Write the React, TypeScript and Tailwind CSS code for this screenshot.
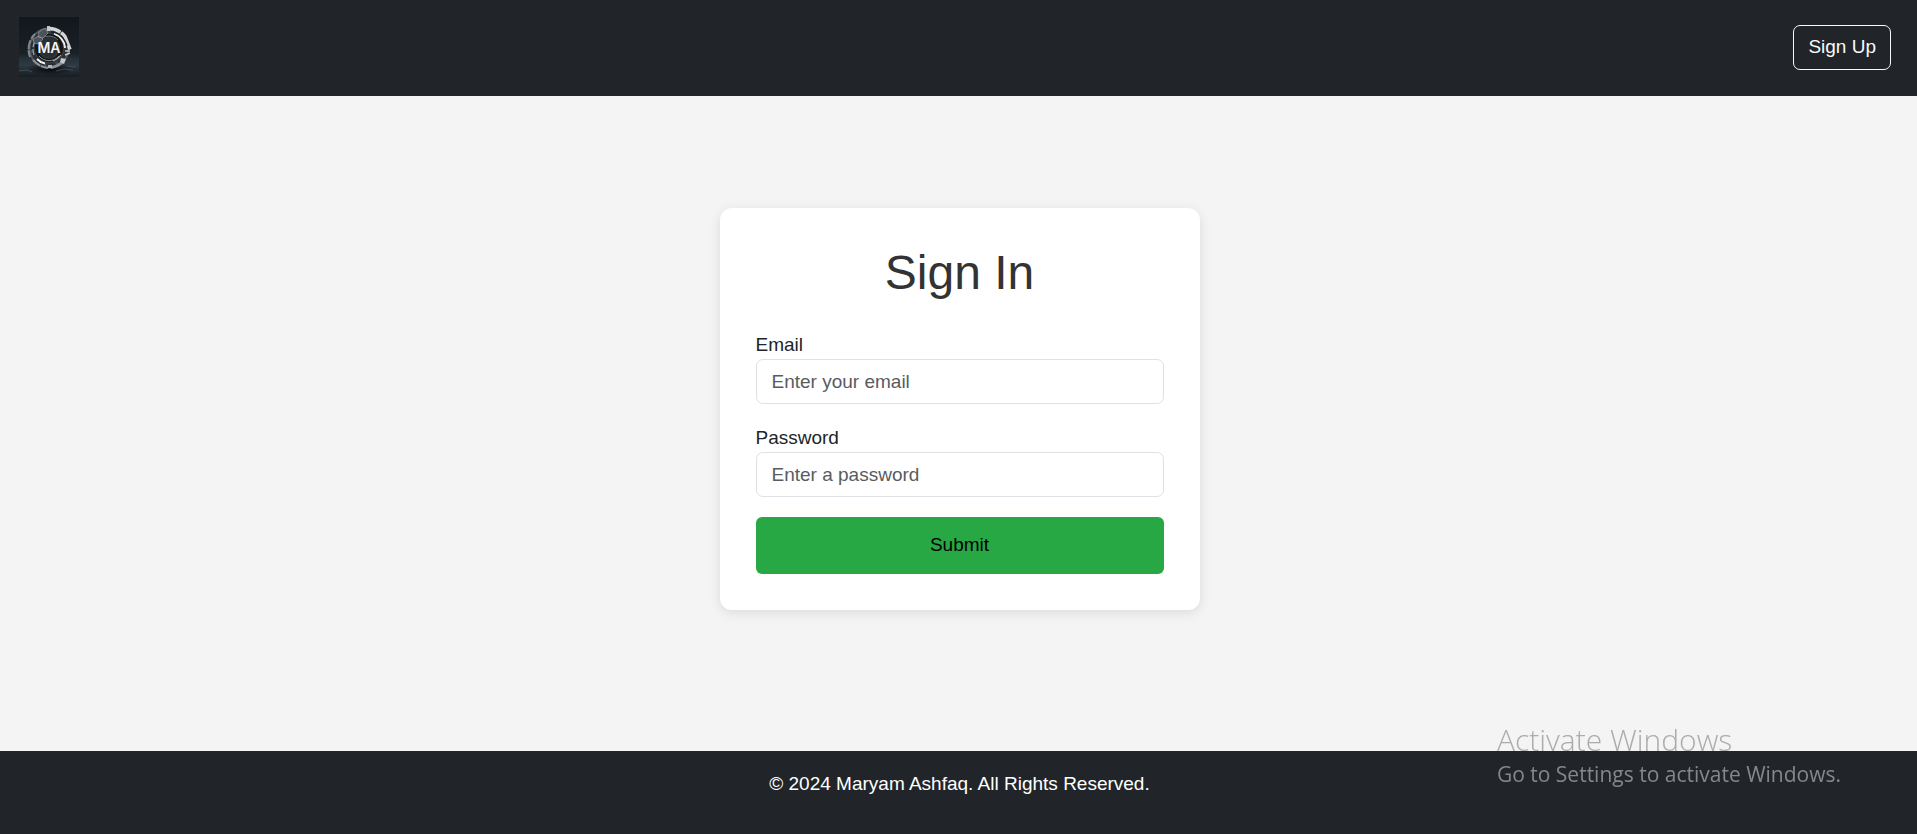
import type { InputHTMLAttributes } from "react";

function Logo() {
  return (
    <svg viewBox="0 0 60 60" className="size-15" role="img" aria-label="MA">
      <defs>
        <linearGradient id="wall" x1="0" y1="0" x2="0" y2="1">
          <stop offset="0" stopColor="#12171b" />
          <stop offset="0.6" stopColor="#192026" />
          <stop offset="0.7" stopColor="#27313a" />
          <stop offset="0.8" stopColor="#2e3943" />
          <stop offset="1" stopColor="#171d23" />
        </linearGradient>
        <radialGradient id="core">
          <stop offset="0" stopColor="#202428" />
          <stop offset="0.7" stopColor="#33383d" />
          <stop offset="1" stopColor="#5b6167" />
        </radialGradient>
        <radialGradient id="shade">
          <stop offset="0" stopColor="#05080a" />
          <stop offset="1" stopColor="#05080a" stopOpacity="0" />
        </radialGradient>
      </defs>
      <rect width="60" height="60" fill="url(#wall)" />
      <ellipse cx="31" cy="52" rx="24" ry="6" fill="url(#shade)" />
      <path d="M0 54l8-1 5 2M37 54l8-2 9 1M48 49l9 1" stroke="#46535d" strokeWidth="0.8" fill="none" />
      <circle cx="30" cy="31" r="20.500" fill="url(#core)" />
      <g fill="none">
        <circle cx="30" cy="31" r="17" stroke="#2a2f34" strokeWidth="3" strokeDasharray="17 3 9 2" />
        <circle cx="30" cy="31" r="12.500" stroke="#131619" strokeWidth="3" />
        <path d="M20 24a12.500 12.500 0 0 1 19-1" stroke="#70777d" strokeWidth="1" />
        <path d="M20 39a13 13 0 0 0 20 0" stroke="#8b9197" strokeWidth="1" />
        <path d="M30 11.500a20.500 20.500 0 0 1 16 8l5 13" stroke="#d3d6d8" strokeWidth="3.500" strokeDasharray="12 1 30" />
        <path d="M35 16.500a16 16 0 0 1 11 14.500" stroke="#eceded" strokeWidth="2" />
        <path d="M32 15a18 18 0 0 1 16 14" stroke="#15191c" strokeWidth="1.200" />
        <path d="M11 40a21 21 0 0 1 5-23" stroke="#81888e" strokeWidth="2" strokeDasharray="7 1 9 2" />
        <path d="M15 38a17 17 0 0 1 4-18" stroke="#9da3a8" strokeWidth="1.200" strokeDasharray="6 2" />
        <path d="M18 42q4 4 8 4.500" stroke="#f4f5f5" strokeWidth="2" />
        <path d="M14 43q6 7 15 8" stroke="#8a9197" strokeWidth="2" strokeDasharray="9 1" />
        <path d="M32 50.500q7-1 12-6" stroke="#8b9196" strokeWidth="3" />
        <path d="M34 44q5-2 8-6" stroke="#a6abb0" strokeWidth="1.200" />
        <path d="M46 38l5-2M46 34h5" stroke="#c3c7ca" strokeWidth="1.500" />
        <path d="M20 15l6-4 3 5-5 5-5-1zM14 22l6-3 4 3-5 5-4-1z" fill="#4b5258" stroke="#90979d" strokeWidth="0.7" />
        <path d="M28 9h3v5h-3zM42 41l5 1-2 5-4-2z" fill="#c5c9cc" />
        <path d="M29 48h4v3h-4z" fill="#aeb3b7" />
      </g>
      <text
        x="30"
        y="36"
        textAnchor="middle"
        fill="#f4f5f6"
        fontFamily="Inter, sans-serif"
        fontWeight="600"
        fontSize="14"
      >
        MA
      </text>
    </svg>
  );
}

function Field({ id, label, ...input }: { id: string; label: string } & InputHTMLAttributes<HTMLInputElement>) {
  return (
    <div className="flex flex-col">
      <label htmlFor={id} className="leading-[29px]">
        {label}
      </label>
      <input
        id={id}
        className="h-[45px] w-full rounded-[7px] border border-[#dee2e6] bg-white px-[15px] text-[#212529] placeholder:text-[#595c5f]"
        {...input}
      />
    </div>
  );
}

export default function App() {
  return (
    <div className="flex min-h-screen flex-col bg-[#f4f4f4] font-['Liberation_Sans',Arial,sans-serif] text-[19px] leading-[29px] text-[#212529]">
      <header className="flex h-24 items-center justify-between bg-[#212529] pr-[26px] pb-0.5 pl-[19px]">
        <a href="#home">
          <Logo />
        </a>
        <button
          type="button"
          className="h-[45px] rounded-[7px] border border-[#f8f9fa] px-3.5 pb-0.5 text-[#f8f9fa]"
        >
          Sign Up
        </button>
      </header>

      <main className="flex flex-1 items-center justify-center pb-[29px] pl-0.5">
        <form
          className="flex w-full max-w-[480px] flex-col rounded-xl bg-white p-9 shadow-[0_3px_12px_rgba(0,0,0,0.1)]"
          onSubmit={(event) => event.preventDefault()}
        >
          <h1 className="mb-7 text-center text-[48px] leading-[58px] text-[#333]">Sign In</h1>
          <div className="mb-5 flex flex-col gap-[19px]">
            <Field id="email" label="Email" type="email" placeholder="Enter your email" />
            <Field id="password" label="Password" type="password" placeholder="Enter a password" />
          </div>
          <button type="submit" className="h-[57px] rounded-md bg-[#28a745] pb-0.5 text-black">
            Submit
          </button>
        </form>
      </main>

      <footer className="bg-[#212529] pt-[18px] pb-9 pl-0.5 text-center text-white">
        <p>© 2024 Maryam Ashfaq. All Rights Reserved.</p>
      </footer>

      <aside className="pointer-events-none fixed right-[76px] bottom-[45px] flex flex-col font-['Open_Sans','Segoe_UI',sans-serif]">
        <p className="text-[30px] leading-[38px] font-light text-[#acacac]">Activate Windows</p>
        <p className="text-[21px] leading-[30px] text-[#85878a]">Go to Settings to activate Windows.</p>
      </aside>
    </div>
  );
}
